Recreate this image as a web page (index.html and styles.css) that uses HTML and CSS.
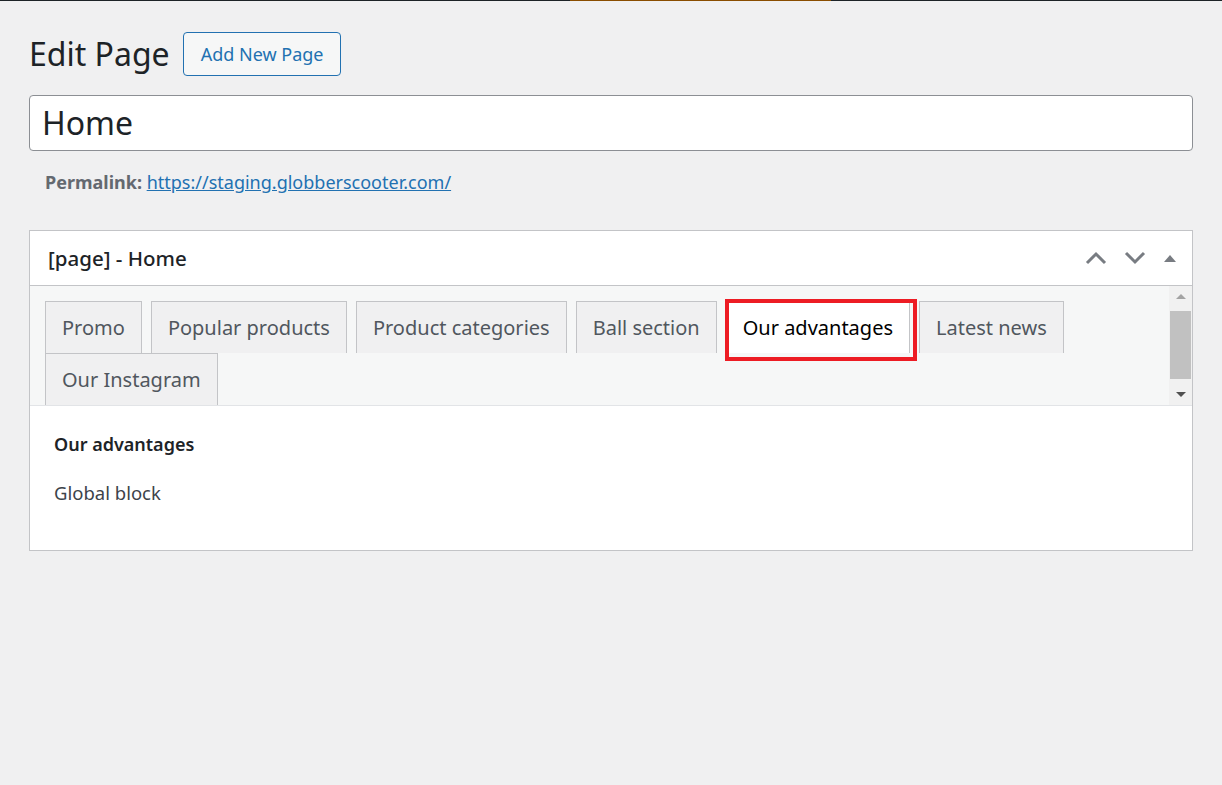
FILE: index.html
```html
<!DOCTYPE html>
<html lang="en">
<head>
    <meta charset="UTF-8">
    <meta name="viewport" content="width=device-width, initial-scale=1.0">
    <title>Edit Page</title>
    <link rel="stylesheet" href="styles.css">
</head>
<body>
    <div class="topbar">
        <span class="topbar-dark left"></span>
        <span class="topbar-active"></span>
        <span class="topbar-dark right"></span>
    </div>

    <div class="wrap">
        <div class="heading">
            <h1>Edit Page</h1>
            <a href="#" class="page-title-action">Add New Page</a>
        </div>

        <div class="title-field">Home</div>

        <div class="permalink">
            <strong>Permalink:</strong>
            <a href="#">https://staging.globberscooter.com/</a>
        </div>

        <div class="postbox">
            <div class="postbox-header">
                <h2>[page] - Home</h2>
                <div class="handle-actions">
                    <svg width="22" height="14" viewBox="0 0 22 14"><path d="M2 12 L11 3 L20 12" fill="none" stroke="#787c82" stroke-width="3"/></svg>
                    <svg width="22" height="14" viewBox="0 0 22 14"><path d="M2 2 L11 11 L20 2" fill="none" stroke="#787c82" stroke-width="3"/></svg>
                    <svg width="14" height="10" viewBox="0 0 14 10"><path d="M1 9 L7 2 L13 9 Z" fill="#787c82"/></svg>
                </div>
            </div>

            <div class="tabs-area">
                <ul class="tabs">
                    <li class="tab">Promo</li>
                    <li class="tab">Popular products</li>
                    <li class="tab">Product categories</li>
                    <li class="tab">Ball section</li>
                    <li class="tab active">Our advantages<span class="highlight"></span></li>
                    <li class="tab">Latest news</li>
                    <li class="tab">Our Instagram</li>
                </ul>
                <div class="scrollbar">
                    <span class="arrow up"></span>
                    <span class="thumb"></span>
                    <span class="arrow down"></span>
                </div>
            </div>

            <div class="postbox-inside">
                <h3>Our advantages</h3>
                <p>Global block</p>
            </div>
        </div>
    </div>
</body>
</html>
```

FILE: styles.css
```css
body {
    margin: 0;
    background: #f0f0f1;
    font-family: "Noto Sans", "Open Sans", sans-serif;
    color: #3c434a;
}
.topbar {
    display: flex;
    height: 1px;
}
.topbar-dark {
    background: #1d2327;
}
.topbar-dark.left {
    width: 570px;
}
.topbar-dark.right {
    flex: 1;
}
.topbar-active {
    width: 261px;
    background: #8a4d00;
}
.wrap {
    padding: 0 29px;
}
.heading {
    display: flex;
    align-items: center;
    padding-top: 30px;
}
h1 {
    margin: 0;
    font-size: 32px;
    font-weight: 400;
    color: #1d2327;
    line-height: 46px;
}
.page-title-action {
    margin-left: 13px;
    padding: 0 17px;
    height: 42px;
    line-height: 42px;
    border: 1px solid #2271b1;
    border-radius: 4px;
    background: #f6f7f7;
    color: #2271b1;
    font-size: 18px;
    text-decoration: none;
}
.title-field {
    margin-top: 18px;
    height: 54px;
    line-height: 54px;
    padding: 0 12px;
    background: #fff;
    border: 1px solid #8c8f94;
    border-radius: 4px;
    font-size: 32px;
    color: #1d2327;
}
.permalink {
    padding: 18px 16px 0;
    font-size: 18px;
    line-height: 26px;
    color: #646970;
}
.permalink strong {
    font-weight: 700;
}
.permalink a {
    color: #2271b1;
}
.postbox {
    margin-top: 35px;
    background: #fff;
    border: 1px solid #c3c4c7;
}
.postbox-header {
    display: flex;
    align-items: center;
    justify-content: space-between;
    height: 54px;
    border-bottom: 1px solid #c3c4c7;
    padding: 0 15px 0 18px;
}
.postbox-header h2 {
    margin: 0;
    font-size: 20.5px;
    font-weight: 500;
    color: #1d2327;
}
.handle-actions {
    display: flex;
    align-items: center;
    gap: 17px;
}
.tabs-area {
    display: flex;
    background: #f6f7f7;
    border-bottom: 1px solid #e2e4e7;
}
.tabs {
    flex: 1;
    list-style: none;
    margin: 0;
    padding: 15px 0 0 15px;
    display: flex;
    flex-wrap: wrap;
    column-gap: 9px;
}
.tab {
    position: relative;
    height: 51px;
    line-height: 51px;
    padding: 0 16px;
    background: #f0f0f1;
    border: 1px solid #c3c4c7;
    border-bottom: none;
    font-size: 20px;
    color: #50575e;
}
.tab.active {
    background: #fff;
    color: #000;
}
.highlight {
    position: absolute;
    left: -2px;
    top: -3px;
    right: -8px;
    bottom: -8px;
    border: 4px solid #ed1c24;
}
.scrollbar {
    width: 23px;
    display: flex;
    flex-direction: column;
    align-items: center;
    background: #f1f1f1;
}
.thumb {
    width: 21px;
    height: 68px;
    background: #c1c1c1;
    margin: 3px 0 5px;
}
.arrow {
    width: 0;
    height: 0;
    border-left: 5px solid transparent;
    border-right: 5px solid transparent;
}
.arrow.up {
    margin-top: 8px;
    border-bottom: 5px solid #a3a3a3;
    margin-bottom: 9px;
}
.arrow.down {
    margin-top: 8px;
    border-top: 5px solid #505050;
}
.postbox-inside {
    padding: 24px 24px 44px;
}
.postbox-inside h3 {
    margin: 0 0 22px;
    font-size: 18px;
    font-weight: 600;
    color: #1d2327;
    line-height: 28px;
}
.postbox-inside p {
    margin: 0;
    font-size: 18.5px;
    line-height: 26px;
    color: #3c434a;
}
```
